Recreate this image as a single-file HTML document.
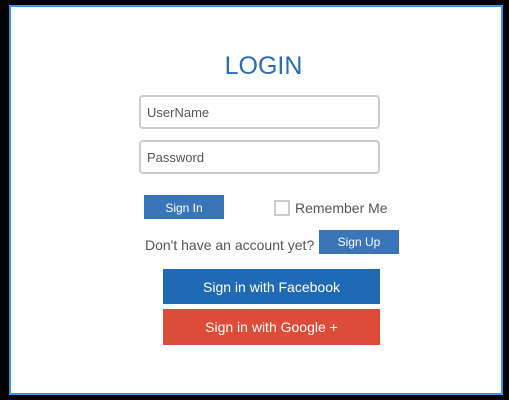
<!DOCTYPE html>
<html><head><style>
body{margin:0;width:509px;height:400px;background:#000;position:relative;overflow:hidden;font-family:"Liberation Sans",sans-serif}
.box{position:absolute;left:9px;top:5px;width:490px;height:386px;background:#fff;border:2px solid #3a96e0}
.a{position:absolute}
.in{position:absolute;left:139px;height:30px;border:2px solid #ccc;border-radius:4px;font-size:13px;color:#555;line-height:32px;padding-left:6px;box-sizing:content-box;width:231px}
.btn{position:absolute;color:#fff;text-align:center}
</style></head><body>
<div class="box"></div>
<div class="a" style="left:0;width:527px;top:52px;text-align:center;font-size:25px;color:#2a6db5">LOGIN</div>
<div class="in" style="top:95px">UserName</div>
<div class="in" style="top:140px">Password</div>
<div class="btn" style="left:144px;top:195px;width:80px;height:24px;line-height:26px;background:#3a75b9;font-size:12px">Sign In</div>
<div class="a" style="left:274px;top:200px;width:12px;height:12px;border:2px solid #ccc"></div>
<div class="a" style="left:295px;top:200px;font-size:14px;color:#555">Remember Me</div>
<div class="a" style="left:145px;top:237px;font-size:14px;color:#555">Don't have an account yet?</div>
<div class="btn" style="left:319px;top:230px;width:80px;height:24px;line-height:25px;background:#3a75b9;font-size:12px">Sign Up</div>
<div class="btn" style="left:163px;top:269px;width:217px;height:35px;line-height:36px;background:#2069b5;font-size:14px">Sign in with Facebook</div>
<div class="btn" style="left:163px;top:309px;width:217px;height:36px;line-height:37px;background:#dd4b39;font-size:14px">Sign in with Google +</div>
</body></html>
